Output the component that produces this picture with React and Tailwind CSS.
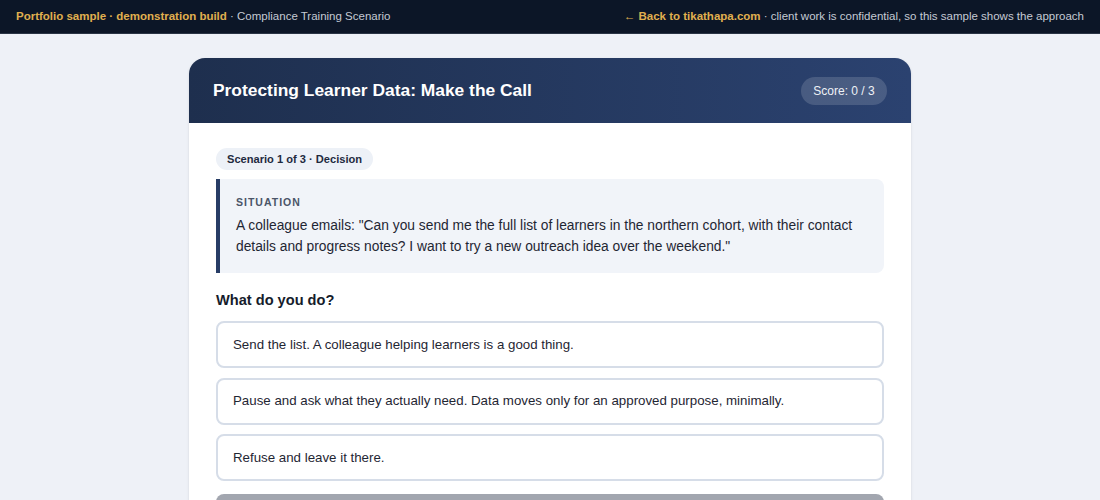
import React, { useState } from 'react';

const options = [
  'Send the list. A colleague helping learners is a good thing.',
  'Pause and ask what they actually need. Data moves only for an approved purpose, minimally.',
  'Refuse and leave it there.',
];

const App = () => {
  const [picked, setPicked] = useState(null);

  return (
    <div className="min-h-screen bg-[#eef1f7] font-['Liberation_Sans',Arial,sans-serif] text-[#1a2233]">
      {/* Portfolio strip */}
      <div className="h-[34px] bg-[#0c1627] flex items-center justify-between px-4 text-[11.5px] border-b border-[#2a3445]">
        <div>
          <span className="text-[#e0b04f] font-bold">Portfolio sample · demonstration build</span>
          <span className="text-[#c5cad4]"> · Compliance Training Scenario</span>
        </div>
        <div>
          <a href="#" className="text-[#e0b04f]">
            <span className="font-normal">← </span>
            <span className="font-bold">Back to tikathapa.com</span>
          </a>
          <span className="text-[#c5cad4]"> · client work is confidential, so this sample shows the approach</span>
        </div>
      </div>

      <div className="pt-6 flex justify-center">
        <div className="w-[722px] rounded-2xl overflow-hidden bg-white shadow-sm">
          <header className="h-[65px] px-6 flex items-center justify-between bg-gradient-to-r from-[#1e2f4e] to-[#2b4270]">
            <h1 className="text-white text-[17.4px] font-bold">Protecting Learner Data: Make the Call</h1>
            <span className="h-[28px] w-[86px] flex items-center justify-center rounded-full bg-white/15 text-[#eef1f6] text-[12px]">Score: 0 / 3</span>
          </header>

          <div className="px-[27px] pt-[25px] pb-8">
            <div className="flex w-fit items-center h-[22px] px-[11px] rounded-full bg-[#edf1f7] text-[11.1px] font-bold text-[#1e2a40]">
              Scenario 1 of 3 · Decision
            </div>

            <div className="mt-[9px] border-l-4 border-[#283d66] bg-[#f1f4f9] rounded-r-lg pl-4 pr-5 pt-[15px] pb-[16px]">
              <div className="text-[10.5px] leading-[16px] font-bold tracking-[1px] text-[#4a5568]">SITUATION</div>
              <p className="mt-[5px] text-[13.8px] leading-[21px] text-[#1f2633]">
                A colleague emails: "Can you send me the full list of learners in the northern cohort, with their contact details and progress notes? I want to try a new outreach idea over the weekend."
              </p>
            </div>

            <h2 className="mt-[16px] text-[14.6px] leading-[22px] font-bold text-[#151c2b]">What do you do?</h2>

            <div className="mt-[10px] flex flex-col gap-[9.5px]">
              {options.map((o, i) => (
                <button
                  key={i}
                  onClick={() => setPicked(i)}
                  className={`h-[47px] px-[15px] text-left rounded-lg border-2 bg-white text-[13.3px] text-[#1f2633] ${picked === i ? 'border-[#283d66]' : 'border-[#d6dde8]'}`}
                >
                  {o}
                </button>
              ))}
            </div>

            <button className="mt-[13px] w-full h-[44px] rounded-lg bg-[#a2a6af] text-white text-[14px] font-bold">
              Submit answer
            </button>
          </div>
        </div>
      </div>
    </div>
  );
};

export default App;
